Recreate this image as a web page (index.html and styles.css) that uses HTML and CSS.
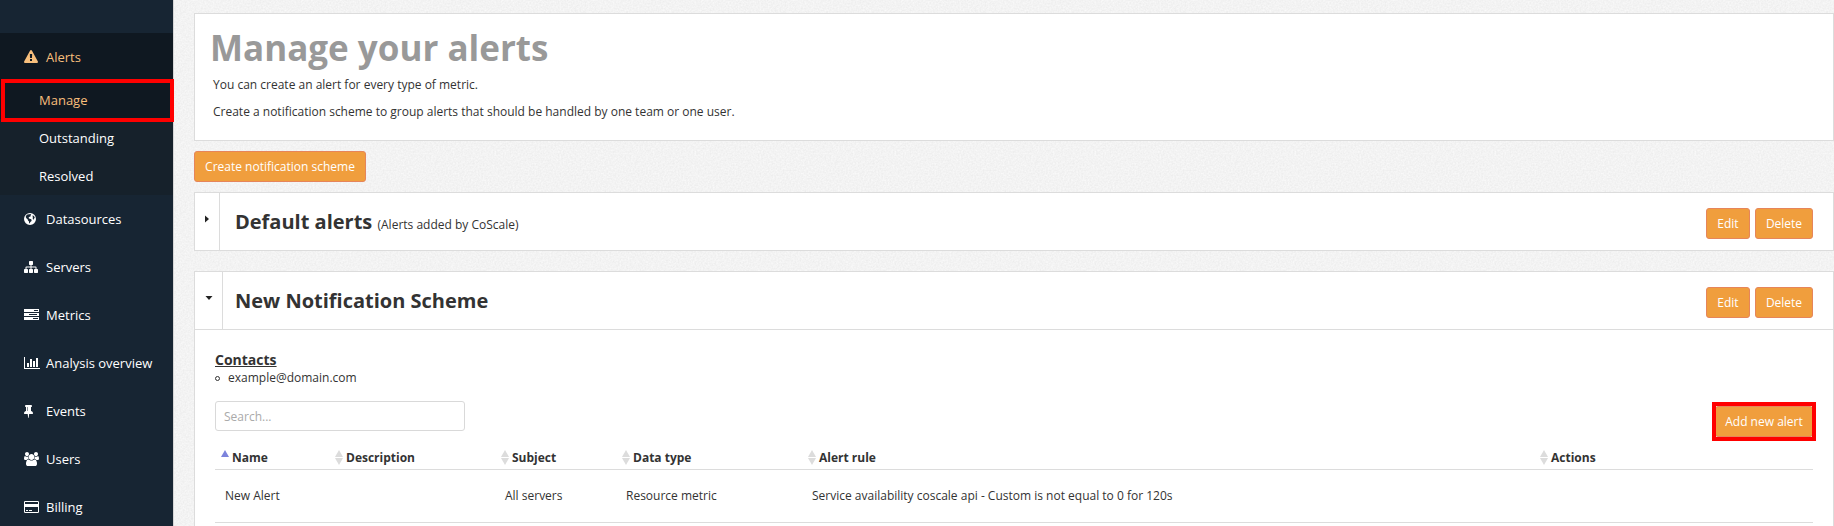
FILE: index.html
```html
<!DOCTYPE html>
<html lang="en">
<head>
<meta charset="utf-8">
<title>Manage your alerts</title>
<link rel="stylesheet" href="styles.css">
</head>
<body>
<div class="app">
  <nav class="sidebar">
    <a class="item active"><svg class="icon" width="14" height="14" viewBox="0 0 1792 1792"><path d="M1024 1375v-190q0-14-9.500-23.500t-22.500-9.500h-192q-13 0-22.500 9.500t-9.500 23.500v190q0 14 9.500 23.500t22.500 9.500h192q13 0 22.500-9.500t9.500-23.500zm-2-374l18-459q0-12-10-19-13-11-24-11h-220q-11 0-24 11-10 7-10 21l17 457q0 10 10 16.500t24 6.500h185q14 0 23.500-6.500t10.500-16.500zm-14-934l768 1408q35 63-2 126-17 29-46.500 46t-63.500 17h-1536q-34 0-63.500-17t-46.500-46q-37-63-2-126l768-1408q17-31 47-49t65-18 65 18 47 49z"/></svg>Alerts</a>
    <div class="submenu">
      <a class="sub selected">Manage</a>
      <a class="sub">Outstanding</a>
      <a class="sub">Resolved</a>
    </div>
    <a class="item"><svg class="icon" width="12" height="12" viewBox="0 0 12 12"><path fill-rule="evenodd" d="M6 0a6 6 0 1 0 0 12A6 6 0 0 0 6 0zM5.200 1.200L6.500 1l.8.700-.9.700.5.600-1 .8-.9.300-.4 1 .9.600 1.300.4.900.9-.4 1.300-1 .8-.5 1.300-.7-.3-.1-1.700-1-.9-.2-1.100-1.200-1-.9-1.300.4-1.300 1.200-1.200zM8.800 2.200l1.500 1.400.5 1.400-.9.500.2 1.200-.9-.4-.7-1.300.6-.9-.7-.8z"/></svg>Datasources</a>
    <a class="item"><svg class="icon" width="14" height="14" viewBox="0 0 1792 1792"><path d="M1792 1248v320q0 40-28 68t-68 28h-320q-40 0-68-28t-28-68v-320q0-40 28-68t68-28h96v-192h-512v192h96q40 0 68 28t28 68v320q0 40-28 68t-68 28h-320q-40 0-68-28t-28-68v-320q0-40 28-68t68-28h96v-192h-512v192h96q40 0 68 28t28 68v320q0 40-28 68t-68 28h-320q-40 0-68-28t-28-68v-320q0-40 28-68t68-28h96v-192q0-52 38-90t90-38h512v-192h-96q-40 0-68-28t-28-68v-320q0-40 28-68t68-28h320q40 0 68 28t28 68v320q0 40-28 68t-68 28h-96v192h512q52 0 90 38t38 90v192h96q40 0 68 28t28 68z"/></svg>Servers</a>
    <a class="item"><svg class="icon" width="15" height="12" viewBox="0 0 15 12" shape-rendering="crispEdges"><path fill-rule="evenodd" d="M0 0h14.500v3H0zM10 1v1h3.500V1zM0 4h14.500v3H0zM5 5v1h8V5zM0 8h14.500v3H0zM9 9v1h4.500V9z"/></svg>Metrics</a>
    <a class="item"><svg class="icon" width="16" height="14" viewBox="0 0 2048 1792"><path d="M640 896v512h-256v-512h256zm384-512v1024h-256v-1024h256zm1024 1152v128h-2048v-1536h128v1408h1920zm-640-896v768h-256v-768h256zm384-384v1152h-256v-1152h256z"/></svg>Analysis overview</a>
    <a class="item"><svg class="icon" width="9" height="14" viewBox="320 0 1152 1792"><path d="M800 864v-448q0-14-9-23t-23-9-23 9-9 23v448q0 14 9 23t23 9 23-9 9-23zm672 352q0 26-19 45t-45 19h-429l-51 483q-2 12-10.500 20.500t-20.500 8.500h-1q-27 0-32-27l-76-485h-404q-26 0-45-19t-19-45q0-123 78.500-221.500t177.500-98.500v-512q-52 0-90-38t-38-90 38-90 90-38h640q52 0 90 38t38 90-38 90-90 38v512q99 0 177.500 98.500t78.500 221.500z"/></svg>Events</a>
    <a class="item"><svg class="icon" width="15" height="14" viewBox="64 0 1920 1792"><path d="M657 896q-162 5-265 128h-134q-82 0-138-40.500t-56-118.500q0-353 124-353 6 0 43.500 21t97.500 42.500 119 21.500q67 0 133-23-5 37-5 66 0 139 81 256zm1071 637q0 120-73 189.500t-194 69.500h-874q-121 0-194-69.500t-73-189.500q0-53 3.500-103.500t14-109 26.500-108.500 43-97.500 62-81 85.500-53.500 111.500-20q10 0 43 21.500t73 48 107 48 135 21.500 135-21.500 107-48 73-48 43-21.500q61 0 111.500 20t85.500 53.500 62 81 43 97.500 26.500 108.500 14 109 3.500 103.500zm-1024-1277q0 106-75 181t-181 75-181-75-75-181 75-181 181-75 181 75 75 181zm704 384q0 159-112.500 271.500t-271.500 112.500-271.500-112.500-112.500-271.500 112.500-271.500 271.500-112.500 271.500 112.500 112.500 271.500zm576 225q0 78-56 118.500t-138 40.500h-134q-103-123-265-128 81-117 81-256 0-29-5-66 66 23 133 23 59 0 119-21.500t97.500-42.500 43.500-21q124 0 124 353zm-128-609q0 106-75 181t-181 75-181-75-75-181 75-181 181-75 181 75 75 181z"/></svg>Users</a>
    <a class="item"><svg class="icon" width="15" height="12" viewBox="0 0 15 12"><path fill-rule="evenodd" d="M1.200 0h12.600Q15 0 15 1.200v9.600q0 1.200-1.200 1.200H1.200Q0 12 0 10.800V1.200Q0 0 1.200 0zM1 1v2h13V1zM1 6v5h13V6zM2 9h2v1H2zM5 9h3v1H5z"/></svg>Billing</a>
    <div class="mark mark-manage"></div>
  </nav>
  <main class="main">
    <section class="panel intro">
      <h1>Manage your alerts</h1>
      <p>You can create an alert for every type of metric.</p>
      <p>Create a notification scheme to group alerts that should be handled by one team or one user.</p>
    </section>
    <button class="btn create">Create notification scheme</button>
    <section class="panel scheme">
      <header class="scheme-head">
        <span class="toggle"><svg width="4" height="8" viewBox="0 0 4 8"><path d="M0 .5L4 4 0 7.500z"/></svg></span>
        <h2>Default alerts <small>(Alerts added by CoScale)</small></h2>
        <div class="buttons"><button class="btn edit">Edit</button><button class="btn delete">Delete</button></div>
      </header>
    </section>
    <section class="panel scheme open">
      <header class="scheme-head">
        <span class="toggle"><svg width="8" height="4" viewBox="0 0 8 4"><path d="M.5 0h7L4 4z"/></svg></span>
        <h2>New Notification Scheme</h2>
        <div class="buttons"><button class="btn edit">Edit</button><button class="btn delete">Delete</button></div>
      </header>
      <div class="scheme-body">
        <h3>Contacts</h3>
        <ul class="contacts"><li>example@domain.com</li></ul>
        <div class="tools">
          <input class="search" type="text" placeholder="Search...">
          <div class="add-wrap"><button class="btn add">Add new alert</button><div class="mark mark-add"></div></div>
        </div>
        <div class="row head">
          <span class="th asc"><i class="sort"></i>Name</span>
          <span class="th"><i class="sort"></i>Description</span>
          <span class="th"><i class="sort"></i>Subject</span>
          <span class="th"><i class="sort"></i>Data type</span>
          <span class="th"><i class="sort"></i>Alert rule</span>
          <span class="th"><i class="sort"></i>Actions</span>
        </div>
        <div class="row data">
          <span>New Alert</span><span></span><span>All servers</span><span>Resource metric</span><span>Service availability coscale api - Custom is not equal to 0 for 120s</span><span></span>
        </div>
      </div>
    </section>
  </main>
</div>
</body>
</html>
```
FILE: styles.css
```css
* { box-sizing: border-box; }
body {
  margin: 0;
  height: 526px;
  overflow: hidden;
  font: 12px/18px "Open Sans", sans-serif;
  color: #333;
  background: #f2f2f2 url("data:image/svg+xml,%3Csvg xmlns='http://www.w3.org/2000/svg' width='200' height='200'%3E%3Cfilter id='n' color-interpolation-filters='sRGB'%3E%3CfeTurbulence type='fractalNoise' baseFrequency='.6' numOctaves='2' stitchTiles='stitch'/%3E%3CfeColorMatrix values='.07 0 0 0 .917 .07 0 0 0 .917 .07 0 0 0 .917 0 0 0 0 1'/%3E%3C/filter%3E%3Crect width='200' height='200' filter='url(%23n)'/%3E%3C/svg%3E");
}
h1, h2, h3, p, ul { margin: 0; padding: 0; }
.app { display: flex; height: 526px; }

.sidebar {
  position: relative;
  flex: none;
  width: 174px;
  padding-top: 33px;
  background: #172533;
  border-right: 1px solid #d6d6d6;
  font-size: 13px;
  color: #fff;
}
.item {
  display: grid;
  grid-template-columns: 22px 1fr;
  align-items: center;
  height: 48px;
  padding-left: 24px;
}
.icon { fill: currentColor; }
.item.active { background: #0f1821; color: #f8bf7c; }
.submenu { background: #16212b; }
.sub { display: block; height: 38px; line-height: 38px; padding-left: 39px; }
.sub.selected { background: #0f1821; color: #f8bf7c; }
.mark { position: absolute; border: 4px solid #f00; }
.mark-manage { left: 1px; top: 79px; width: 173px; height: 43px; }

.main { flex: 1; min-width: 0; padding: 13px 0 0 20px; }
.panel { background: #fff; border: 1px solid #dcdcdc; }
.intro { height: 128px; padding: 10px 18px; }
.intro h1 { margin-left: -3px; font-size: 35px; line-height: 48px; color: #999; }
.intro p { line-height: 18px; margin: 4px 0 9px; }
.intro p + p { margin-top: 0; }
.btn {
  display: block;
  height: 31px;
  padding: 0;
  border: 1px solid #e6855a;
  border-radius: 3px;
  background: #f09e3d;
  color: #fff;
  font: 12px/18px "Open Sans", sans-serif;
}
.create { width: 172px; margin: 10px 0; }
.scheme { height: 59px; margin-bottom: 20px; }
.scheme.open { height: 255px; margin: 0; border-bottom: 0; }
.scheme-head { display: flex; height: 57px; }
.open .scheme-head { height: 58px; border-bottom: 1px solid #dcdcdc; }
.toggle { display: flex; flex: none; align-items: flex-start; width: 25px; padding: 22px 0 0 10px; border-right: 1px solid #dcdcdc; }
.toggle svg { fill: #222; }
.open .toggle { width: 28px; padding-top: 24px; }
h2 { flex: 1; padding-left: 15px; font-size: 20px; line-height: 58px; }
.open h2 { padding-left: 12px; }
h2 small { font-size: 12px; font-weight: 400; }
.buttons { display: flex; gap: 5px; padding: 15px 20px 0 0; }
.edit { width: 44px; }
.delete { width: 58px; }

.scheme-body { padding: 20px 20px 0; }
h3 { font-size: 14px; line-height: 20px; text-decoration: underline; }
.contacts { list-style: none; line-height: 16px; }
.contacts li { display: flex; align-items: center; }
.contacts li::before { content: ""; width: 3px; height: 3px; margin-right: 8px; border: 1px solid #333; border-radius: 50%; }
.tools { display: flex; justify-content: space-between; margin-top: 15px; height: 47px; }
.search {
  width: 250px;
  height: 30px;
  padding: 0 8px;
  border: 1px solid #d9d9d9;
  border-radius: 3px;
  font: 12px "Open Sans", sans-serif;
}
.search::placeholder { color: #aaa; }
.add-wrap { position: relative; padding-top: 5px; }
.add { width: 98px; }
.mark-add { left: -3px; top: 1px; width: 104px; height: 39px; }
.row { display: grid; grid-template-columns: 114px 166px 121px 186px 732px 1fr; border-bottom: 1px solid #dcdcdc; }
.head { height: 22px; font-weight: 700; line-height: 20px; }
.th { display: flex; padding-left: 5.5px; }
.sort { width: 8px; margin: 2px 3.5px 0 0; display: grid; gap: 1px; align-content: start; }
.sort::before, .sort::after { content: ""; border: solid transparent; border-width: 0 4px; }
.sort::before { border-bottom: 7px solid #dcdcdc; }
.sort::after { border-top: 7px solid #dcdcdc; }
.asc .sort::before { border-bottom-color: #7c83dc; }
.asc .sort::after { visibility: hidden; }
.data { height: 53px; line-height: 52px; }
.data span { padding-left: 10px; white-space: nowrap; }
```
